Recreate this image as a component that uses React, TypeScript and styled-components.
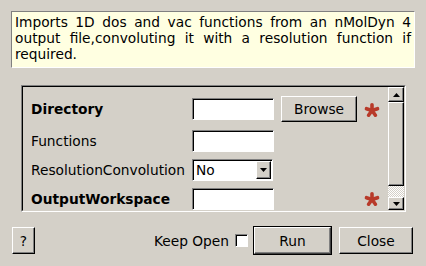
import React from 'react';
import styled, { createGlobalStyle, css } from 'styled-components';

const Global = createGlobalStyle`
  html, body { margin: 0; padding: 0; background: #d4d0c8; }
  body {
    width: 426px; height: 266px; overflow: hidden;
    font-family: "DejaVu Sans", "Liberation Sans", sans-serif;
    font-size: 13.75px; color: #000;
  }
  * { box-sizing: border-box; }
`;

const raised = css`
  border: 1px solid;
  border-color: #ffffff #000000 #000000 #ffffff;
  box-shadow: inset -1px -1px 0 #808080;
  background: #d4d0c8;
`;

const sunken = css`
  border: 1px solid;
  border-color: #808080 #ffffff #ffffff #808080;
  box-shadow: inset 1px 1px 0 #000000;
`;

const Window = styled.div`
  width: 426px;
  height: 266px;
  background: #d4d0c8;
  display: flex;
  flex-direction: column;
  padding-top: 11px;
`;

const Description = styled.div`
  margin: 0 11px;
  height: 57px;
  background: #ffffe1;
  border: 1px solid;
  border-color: #808080 #ffffff #ffffff #808080;
  padding: 2px 3px 0 3px;
  line-height: 16px;
  text-align: justify;
`;

const Panel = styled.div`
  margin: 17px 20px 0 21px;
  height: 127px;
  border: 1px solid;
  border-color: #808080 #ffffff #ffffff #808080;
`;

const PanelInner = styled.div`
  height: 100%;
  border: 1px solid;
  border-color: #000000 #d4d0c8 #d4d0c8 #000000;
  display: flex;
  overflow: hidden;
`;

const Form = styled.div`
  flex: 1;
  padding: 9px 0 0 8px;
  display: grid;
  grid-template-columns: 154px 82px 76px 16px;
  grid-template-rows: 27px 22px 22px 22px;
  column-gap: 7px;
  row-gap: 7px;
  align-items: start;
  align-content: start;
`;

const Label = styled.div<{ $bold?: boolean; $offset?: number }>`
  font-weight: ${p => (p.$bold ? 'bold' : 'normal')};
  white-space: nowrap;
  line-height: 22px;
  margin-top: ${p => p.$offset ?? 0}px;
`;

const TextField = styled.input<{ $offset?: number }>`
  ${sunken};
  width: 82px;
  height: 22px;
  margin: ${p => p.$offset ?? 0}px 0 0 0;
  background: #ffffff;
  padding: 0 3px;
  font: inherit;
  outline: none;
`;

const Combo = styled.div`
  ${sunken};
  width: 81px;
  height: 22px;
  background: #ffffff;
  display: flex;
  align-items: center;
  padding: 1px 1px 1px 3px;
`;

const ComboText = styled.span`
  flex: 1;
  line-height: 18px;
`;

const ArrowButton = styled.div<{ $w: number; $h: number }>`
  ${raised};
  width: ${p => p.$w}px;
  height: ${p => p.$h}px;
  display: flex;
  align-items: center;
  justify-content: center;
  flex: none;
`;

const PushButton = styled.button<{ $w: number; $h: number; $default?: boolean }>`
  ${raised};
  width: ${p => p.$w}px;
  height: ${p => p.$h}px;
  font: inherit;
  color: #000;
  padding: 0;
  cursor: default;
  ${p =>
    p.$default &&
    css`
      outline: 1px solid #000;
      outline-offset: 0;
      border-color: #ffffff #404040 #404040 #ffffff;
    `}
`;

const Required = styled.div<{ $h: number }>`
  width: 16px;
  height: ${p => p.$h}px;
  display: flex;
  align-items: center;
  justify-content: center;
`;

const Scrollbar = styled.div`
  width: 16px;
  flex: none;
  display: flex;
  flex-direction: column;
`;

const Thumb = styled.div`
  ${raised};
  height: 84px;
  flex: none;
`;

const Track = styled.div`
  height: 11px;
  flex: none;
  background: repeating-conic-gradient(#ffffff 0 25%, #d4d0c8 0 50%) 0 0 / 2px 2px;
`;

const BottomBar = styled.div`
  margin-top: 15px;
  height: 27px;
  padding: 0 13px 0 12px;
  display: flex;
  align-items: center;
`;

const Spacer = styled.div`
  flex: 1;
`;

const KeepOpen = styled.label`
  display: flex;
  align-items: center;
  gap: 6px;
  margin-right: 6px;
`;

const CheckBox = styled.span`
  ${sunken};
  width: 13px;
  height: 13px;
  background: #ffffff;
`;

const ButtonGroup = styled.div`
  display: flex;
  gap: 8px;
`;

const Asterisk = () => (
  <svg width="16" height="16" viewBox="0 0 16 16">
    {[0, 1, 2, 3, 4].map(i => {
      const a = ((i * 72 - 90) * Math.PI) / 180;
      return (
        <line
          key={i}
          x1={8}
          y1={8.5}
          x2={8 + 5.8 * Math.cos(a)}
          y2={8.5 + 5.8 * Math.sin(a)}
          stroke="#b83a2a"
          strokeWidth={3.6}
          strokeLinecap="round"
        />
      );
    })}
  </svg>
);

const Tri = ({ up }: { up?: boolean }) => (
  <svg width="7" height="4" viewBox="0 0 7 4">
    <polygon points={up ? '3.5,0 7,4 0,4' : '0,0 7,0 3.5,4'} fill="#000" />
  </svg>
);

export default function App() {
  return (
    <>
      <Global />
      <Window>
        <Description>
          Imports 1D dos and vac functions from an nMolDyn 4 output file,convoluting it with a
          resolution function if required.
        </Description>
        <Panel>
          <PanelInner>
            <Form>
              <Label $bold $offset={2}>Directory</Label>
              <TextField $offset={2} />
              <PushButton $w={76} $h={26}>Browse</PushButton>
              <Required $h={27}>
                <Asterisk />
              </Required>

              <Label>Functions</Label>
              <TextField />
              <span />
              <span />

              <Label>ResolutionConvolution</Label>
              <Combo>
                <ComboText>No</ComboText>
                <ArrowButton $w={15} $h={18}>
                  <Tri />
                </ArrowButton>
              </Combo>
              <span />
              <span />

              <Label $bold>OutputWorkspace</Label>
              <TextField />
              <span />
              <Required $h={22}>
                <Asterisk />
              </Required>
            </Form>
            <Scrollbar>
              <ArrowButton $w={16} $h={15}>
                <Tri up />
              </ArrowButton>
              <Thumb />
              <Track />
              <ArrowButton $w={16} $h={13}>
                <Tri />
              </ArrowButton>
            </Scrollbar>
          </PanelInner>
        </Panel>
        <BottomBar>
          <PushButton $w={23} $h={27}>?</PushButton>
          <Spacer />
          <KeepOpen>
            Keep Open
            <CheckBox />
          </KeepOpen>
          <ButtonGroup>
            <PushButton $w={77} $h={27} $default>Run</PushButton>
            <PushButton $w={74} $h={27}>Close</PushButton>
          </ButtonGroup>
        </BottomBar>
      </Window>
    </>
  );
}
